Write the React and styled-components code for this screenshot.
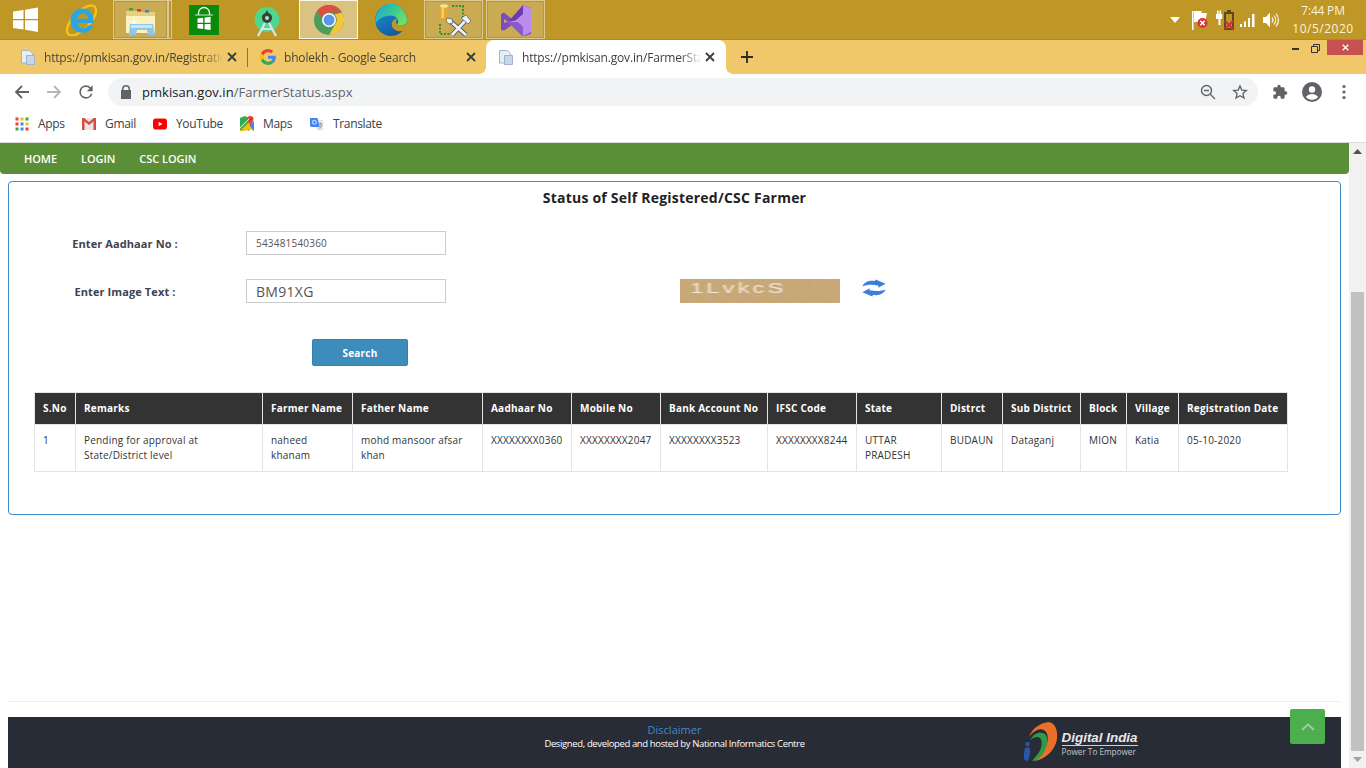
import React from 'react';
import styled, { createGlobalStyle } from 'styled-components';

const Global = createGlobalStyle`
  html, body { margin: 0; padding: 0; width: 1366px; height: 768px; overflow: hidden; background: #fff; }
  * { box-sizing: border-box; }
  body { font-family: "Open Sans", "Noto Sans", Arial, sans-serif; }
`;

const Screen = styled.div`
  width: 1366px; height: 768px; display: flex; flex-direction: column; overflow: hidden; background: #fff;
`;

/* ---------- Windows taskbar ---------- */
const Taskbar = styled.div`
  height: 40px; flex: none; background: #bf9727; border-bottom: 1px solid #b08a20;
  display: flex; align-items: stretch; justify-content: space-between;
`;
const TaskGroup = styled.div`
  display: flex; align-items: stretch;
`;
const TaskSlot = styled.div`
  width: ${p => p.$w || 48}px; height: 39px; flex: none; display: flex; align-items: center; justify-content: center;
  margin-left: ${p => p.$ml || 0}px;
  ${p => p.$state === 'open' && `background: rgba(255,255,255,.2); border: 1px solid rgba(255,255,255,.35); box-shadow: inset 0 0 0 1px rgba(120,90,10,.25);`}
  ${p => p.$state === 'active' && `background: rgba(255,255,255,.42); border: 1px solid rgba(255,255,255,.85);`}
`;
const Tray = styled.div`
  display: flex; align-items: center; padding-right: 16px; color: #fff;
`;
const TrayIcon = styled.div`
  display: flex; align-items: center; justify-content: center; margin-left: ${p => p.$ml || 0}px; width: ${p => p.$w}px;
`;
const Clock = styled.div`
  margin-left: 17px; width: 54px; display: flex; flex-direction: column; align-items: center;
  font-family: "Open Sans", sans-serif; font-size: 12px; line-height: 18px; color: #fbf3dc; white-space: nowrap;
`;
const ClockLine = styled.div`
  letter-spacing: ${p => p.$ls};
`;

/* ---------- Chrome tabs ---------- */
const TabStrip = styled.div`
  height: 34px; flex: none; background: #f0c869; display: flex; align-items: stretch; padding-left: 8px; position: relative;
`;
const Tab = styled.div`
  width: ${p => p.$w}px; flex: none; display: flex; align-items: center; padding: 0 ${p => p.$pr}px 0 12px; position: relative;
  font-family: "Open Sans", sans-serif; font-size: 12px; color: #4a4436; margin-right: ${p => p.$mr || 0}px;
  ${p => p.$active && `
    background: #fff; border-radius: 8px 8px 0 0; color: #3c4043;
    &::before, &::after { content: ''; position: absolute; bottom: 0; width: 8px; height: 8px; }
    &::before { left: -8px; background: radial-gradient(circle at 0 0, transparent 8px, #fff 8px); }
    &::after { right: -8px; background: radial-gradient(circle at 100% 0, transparent 8px, #fff 8px); }
  `}
  ${p => p.$divider && `
    &::after { content: ''; position: absolute; right: 0; top: 8px; height: 19px; width: 1px; background: #8b7440; }
  `}
`;
const TabTitle = styled.span`
  flex: 1; margin-left: 8px; white-space: nowrap; overflow: hidden; letter-spacing: -.18px;
  -webkit-mask-image: linear-gradient(90deg, #000 88%, transparent 100%);
  mask-image: linear-gradient(90deg, #000 88%, transparent 100%);
`;
const TabClose = styled.div`
  width: 16px; height: 16px; flex: none; display: flex; align-items: center; justify-content: center;
`;
const NewTab = styled.div`
  width: 20px; display: flex; align-items: center; justify-content: center; margin-left: 11px;
`;
const WindowControls = styled.div`
  position: absolute; right: 3px; top: 0; display: flex; align-items: flex-start;
`;
const WinBtn = styled.div`
  height: 15px; width: ${p => p.$w}px; display: flex; align-items: center; justify-content: center; padding-top: ${p => p.$pt || 0}px;
  ${p => p.$close && `background: #c75050;`}
`;

/* ---------- Chrome toolbar ---------- */
const Toolbar = styled.div`
  height: 37px; flex: none; background: #fff; display: flex; align-items: center; padding: 0 0 1px 12px;
`;
const ToolBtn = styled.div`
  width: 20px; height: 20px; display: flex; align-items: center; justify-content: center; flex: none;
  margin-right: ${p => p.$mr || 0}px; margin-left: ${p => p.$ml || 0}px;
`;
const Omnibox = styled.div`
  width: 1150px; height: 28px; border-radius: 14px; background: #f1f3f4; display: flex; align-items: center;
  padding: 0 8px 0 12px; font-family: "Open Sans", sans-serif; font-size: 13px; flex: none;
`;
const Url = styled.span`
  margin-left: 10px; flex: 1; color: #5f6368; letter-spacing: .05px;
  b { font-weight: 400; color: #202124; }
`;
const BookmarksBar = styled.div`
  height: 28px; flex: none; display: flex; align-items: center; padding: 0 0 3px 15px;
  font-family: "Open Sans", sans-serif; font-size: 12px; color: #3c4043;
`;
const Bookmark = styled.div`
  display: flex; align-items: center; gap: 9px; width: ${p => p.$w}px; flex: none;
  span { letter-spacing: -.34px; }
`;

/* ---------- Page ---------- */
const Viewport = styled.div`
  flex: 1; min-height: 0; display: flex; margin-top: 3px; border-top: 1px solid #dcdcdc;
`;
const Page = styled.div`
  flex: 1; min-width: 0; display: flex; flex-direction: column; position: relative;
`;
const Nav = styled.nav`
  height: 31px; flex: none; background: #5a8f38; border-radius: 0 0 4px 4px; display: flex; align-items: center; padding-left: 24px; gap: 24px;
`;
const NavLink = styled.a`
  color: #fff; font-size: 11px; font-weight: 600; letter-spacing: -.05px; line-height: 31px; text-decoration: none;
`;
const Panel = styled.section`
  margin: 7px 8px 0; height: 334px; width: 1333px; flex: none; border: 1px solid #428bca; border-radius: 4px; padding-top: 6px;
`;
const Title = styled.h2`
  margin: 0; font-size: 14px; font-weight: 700; color: #222; text-align: center; line-height: 19px; letter-spacing: .22px;
`;
const FormRow = styled.div`
  display: grid; grid-template-columns: 220px 200px auto auto; justify-content: start; align-items: center;
  column-gap: 11px; padding-left: 6px; margin-top: ${p => p.$mt}px; height: 24px;
`;
const FieldLabel = styled.label`
  text-align: center; font-size: 11px; font-weight: 700; color: #3d4352; letter-spacing: .1px;
`;
const TextBox = styled.div`
  height: 24px; border: 1px solid #ccc; background: #fff; color: #555; display: flex; align-items: center; padding-left: 9px;
  font-size: ${p => p.$fs}px; letter-spacing: ${p => p.$ls};
`;
const Captcha = styled.div`
  width: 160px; height: 24px; margin-left: 223px; background: #c9a878; overflow: hidden;
  background-image: repeating-linear-gradient(45deg, rgba(255,255,255,.04) 0 1px, transparent 1px 3px), repeating-linear-gradient(-45deg, rgba(110,70,20,.04) 0 1px, transparent 1px 3px);
  display: flex; align-items: center; padding-left: 10px;
  font-family: "Liberation Sans", Arial, sans-serif; font-size: 14px; color: #f1e9da; letter-spacing: 1.8px; line-height: 20px;
  span { filter: blur(.5px); transform: translateY(-3px) scaleX(1.7); transform-origin: left center; display: block; white-space: nowrap; }
`;
const Refresh = styled.div`
  margin-left: 9px; width: 28px; height: 24px; display: flex; align-items: flex-start; justify-content: center;
`;
const SearchRow = styled.div`
  margin-top: 36px; padding-left: 303px;
`;
const SearchButton = styled.button`
  display: block; width: 96px; height: 27px; border: 1px solid #367fa9; border-radius: 2px; background: #3c8dbc; color: #fff;
  font-family: inherit; font-size: 10px; font-weight: 700; letter-spacing: .2px; padding: 0;
`;
const Table = styled.table`
  margin: 26px 0 0 25px; width: 1253px; border-collapse: collapse; table-layout: fixed; font-size: 10px; color: #333;
`;
const Th = styled.th`
  background: #333; color: #fff; font-weight: 700; text-align: left; height: 32px; padding: 0 8px 2px;
  border: 1px solid #e4e4e4; white-space: nowrap; font-size: 10px; letter-spacing: .22px;
`;
const Td = styled.td`
  border: 1px solid #e4e4e4; padding: 8px 8px 8px; vertical-align: top; line-height: 15px; height: 47px; letter-spacing: .2px;
  font-size: 10px;
`;
const Spacer = styled.div`
  flex: 1;
`;
const Rule = styled.hr`
  flex: none; margin: 0 8px 15px; width: 1333px; height: 1px; border: 0; background: #f0f0f0;
`;
const Footer = styled.footer`
  flex: none; margin: 0 8px; width: 1333px; height: 51px; background: #272c36; display: grid; grid-template-columns: 1fr auto 1fr;
`;
const FootText = styled.div`
  text-align: center; padding-top: 5px;
`;
const Disclaimer = styled.a`
  display: block; color: #428bca; font-size: 11px; line-height: 15px;
`;
const Credit = styled.div`
  color: #fff; font-size: 9.5px; line-height: 13px; letter-spacing: -.37px; white-space: nowrap;
`;
const LogoWrap = styled.div`
  padding: 5px 0 0 218px; display: flex; align-items: flex-start;
`;
const LogoText = styled.div`
  margin-left: 3px; margin-top: 9px; color: #e8e8e8;
`;
const LogoName = styled.div`
  font-family: "Liberation Sans", Arial, sans-serif; font-size: 13.4px; font-weight: 700; font-style: italic; line-height: 14px;
  border-bottom: 1px solid #cfcfcf; white-space: nowrap;
`;
const LogoTag = styled.div`
  font-size: 8.2px; line-height: 11px; color: #c6c6c6; white-space: nowrap;
`;
const ToTop = styled.a`
  position: absolute; right: 24px; bottom: 24px; width: 35px; height: 35px; background: #4cae4c; border-radius: 2px;
  display: flex; align-items: center; justify-content: center;
`;
const Scrollbar = styled.div`
  width: 17px; flex: none; background: #f1f1f1; display: flex; flex-direction: column; align-items: stretch;
`;
const ScrollArrow = styled.div`
  height: 17px; flex: none; display: flex; align-items: center; justify-content: center;
`;
const ScrollTrack = styled.div`
  flex: 1; padding: 132px 2px 0; display: flex;
`;
const Thumb = styled.div`
  flex: 1; background: #c1c1c1;
`;

/* ---------- Icons ---------- */
const WindowsLogo = () => (
  <svg width="27" height="27" viewBox="0 0 27 27"><path fill="#fff" d="M1 5.500l10.500-1.600v9H1zM13 3.700L26 1.500v11.400H13zM1 14.300h10.500v9.100L1 21.900zM13 14.300h13v11.600l-13-2.100z"/></svg>
);
const IELogo = () => (
  <svg width="32" height="32" viewBox="0 0 32 32">
    <ellipse cx="15.500" cy="16.500" rx="19" ry="8.500" transform="rotate(-46 15.500 16.500)" fill="none" stroke="#f3c11b" strokeWidth="2.400"/>
    <path fill="#29a5e3" d="M16 4.500c6.800 0 11.500 5 11.500 11.500v3H11.300c.3 3.200 2.400 5.200 5.400 5.200 2.200 0 4-1.100 4.900-2.800h5.500C25.300 26 21.500 28.800 16.500 28.800 9.500 28.800 4.500 23.500 4.500 16.800S9.500 4.500 16 4.500zm-4.600 10.300h10.800c-.2-3-2.400-5.200-5.200-5.200-3 0-5.200 2.100-5.600 5.200z"/>
  </svg>
);
const Folder = () => (
  <svg width="32" height="32" viewBox="0 0 32 32">
    <path fill="#e9cf7e" d="M1 7h11l2 1h16v21H1z"/>
    <rect x="4" y="4" width="4" height="2.500" fill="#3fa34a"/><rect x="12" y="5" width="4" height="2.500" fill="#c9453a"/><rect x="20" y="6" width="4" height="2.500" fill="#3a88c9"/>
    <path fill="#fdf1bd" d="M1 12h29v17H1z"/>
    <path fill="#fff" opacity=".9" d="M9 13l1 4 4 1-4 1-1 4-1-4-4-1 4-1z"/>
    <path fill="#8fc7e8" d="M5 20h23l2 11h-7l-1-5H12l-1 5H4z"/>
    <path fill="#c8e6f6" d="M6 21h21v3H6z"/>
  </svg>
);
const StoreIcon = () => (
  <svg width="30" height="30" viewBox="0 0 30 30">
    <rect width="30" height="30" fill="#0a8a0a"/>
    <path fill="none" stroke="#fff" strokeWidth="1.300" d="M9.500 10V8a5.500 5.500 0 0 1 11 0v2"/>
    <path fill="none" stroke="#cfe9cf" strokeWidth="1" d="M6 10h18"/>
    <path fill="#fff" d="M8.500 13.500l5.700-.8v5H8.500zM15.600 12.500l6-.8v6h-6zM8.500 19h5.700v5l-5.700-.8zM15.600 19h6v6l-6-.8z"/>
  </svg>
);
const AndroidStudio = () => (
  <svg width="30" height="34" viewBox="0 0 30 34">
    <circle cx="15" cy="16.500" r="12.500" fill="#4fd88d"/>
    <path fill="#34423e" d="M15 7l1.500 3a5 5 0 0 1 3.500 5 5 5 0 0 1-10 0 5 5 0 0 1 3.500-5z"/>
    <circle cx="15" cy="15" r="2" fill="#a8e8c4"/>
    <path fill="none" stroke="#d8e6ec" strokeWidth="2.200" d="M13 20L6 33M17 20l7 13M9 26h12"/>
  </svg>
);
const Chrome = () => (
  <svg width="30" height="30" viewBox="0 0 30 30">
    <circle cx="15" cy="15" r="15" fill="#4a9d5b"/>
    <path fill="#dc5044" d="M15 0a15 15 0 0 1 13 7.500H15a7.500 7.500 0 0 0-7.200 5.400L2.600 6.500A15 15 0 0 1 15 0z"/>
    <path fill="#f5c63c" d="M28 7.500A15 15 0 0 1 15 30l6.500-11.200A7.500 7.500 0 0 0 20.500 9.500z" />
    <circle cx="15" cy="15" r="7" fill="#fff"/><circle cx="15" cy="15" r="5.500" fill="#5c94ec"/>
  </svg>
);
const Edge = () => (
  <svg width="32" height="32" viewBox="0 0 32 32">
    <defs>
      <linearGradient id="eg1" x1="0" y1="0" x2="1" y2=".6"><stop offset="0" stopColor="#1fa5d6"/><stop offset=".55" stopColor="#35c79a"/><stop offset="1" stopColor="#74dd62"/></linearGradient>
      <linearGradient id="eg2" x1="0" y1="0" x2=".7" y2="1"><stop offset="0" stopColor="#1c92d4"/><stop offset="1" stopColor="#10599f"/></linearGradient>
    </defs>
    <circle cx="16" cy="16" r="16" fill="url(#eg2)"/>
    <path fill="url(#eg1)" d="M16 0C25 0 32 7.500 32 17c0 3.500-5 5.500-10 4.500 3-4.500 0-10-6-10C9 11.500 3 15 0 20 0 8 7 0 16 0z"/>
    <path fill="#bf9727" d="M32 18c-1 4-7 5-10 2-2-2-1-5 2-5-5-1-8 3-7 7 1 4 6 6 11 5l8 5z"/>
  </svg>
);
const Tools = () => (
  <svg width="34" height="34" viewBox="0 0 34 34">
    <path fill="#e3a92b" d="M3 3h8v13H3z"/><ellipse cx="7" cy="3" rx="4" ry="1.800" fill="#f7e0a0"/><path fill="#f5d06a" d="M4.500 4h2.500v11H4.500z"/>
    <path fill="none" stroke="#2f8f3a" strokeWidth="2" strokeDasharray="2 1.500" d="M15 3h11v13M3 21v10h11"/>
    <path stroke="#4a5664" strokeWidth="4.500" d="M13 18l16 14M28 18L15 32"/>
    <path stroke="#eef2f6" strokeWidth="2.800" d="M13 18l16 14M28 18L15 32"/>
    <path fill="#eef2f6" stroke="#4a5664" strokeWidth=".7" d="M24 15l5-3 5 6-3 3z"/>
    <path fill="#eef2f6" stroke="#4a5664" strokeWidth=".7" d="M10 15l5 1 1 4-4 1-3-3z"/>
  </svg>
);
const VS = () => (
  <svg width="34" height="32" viewBox="0 0 32 32">
    <path fill="#7c4cc4" d="M1 10l3-1.500L12 15 8 18l-4-3v4l4-1 4 3-8 5.500L1 26z"/>
    <path fill="#6a3bb4" d="M8 18L23 1l8 3v3l-13 9z"/>
    <path fill="#8a58cf" d="M8 18l15 15 8-3v-3l-13-9z"/>
    <path fill="#b98cee" d="M23 1l8 3v24l-8 4V23l-7-7 7-6z"/>
  </svg>
);
const Caret = () => <svg width="10" height="6" viewBox="0 0 10 6"><path fill="#fff" d="M0 0h10L5 6z"/></svg>;
const FlagX = () => (
  <svg width="18" height="22" viewBox="0 0 18 22">
    <path fill="#fff" d="M1 2h1.500v19H1zM3 2h8l-1 2h6l-2 9H3z"/>
    <circle cx="11.500" cy="14" r="5" fill="#d9333a"/><path stroke="#fff" strokeWidth="1.600" d="M9.300 11.800l4.400 4.400M13.700 11.800l-4.400 4.400"/>
  </svg>
);
const BatteryX = () => (
  <svg width="19" height="22" viewBox="0 0 19 22">
    <path fill="#fff" d="M2 1.500h1.500V5h1V1.500H6V5h1.200v5H5.500v6h-2v-6H1V5h1z"/>
    <path fill="none" stroke="#5c4a1e" strokeWidth="2" d="M10 4h8v16h-8z"/><rect x="12" y="1" width="4" height="3" fill="#5c4a1e"/>
    <path stroke="#d9333a" strokeWidth="2.200" d="M10 12l8 8M18 12l-8 8"/>
  </svg>
);
const Signal = () => (
  <svg width="16" height="14" viewBox="0 0 16 14"><path fill="#fff" d="M1 11h2v3H1zM5 8.500h2V14H5zM9 5h2v9H9zM13 1h2.500v13H13z"/></svg>
);
const Speaker = () => (
  <svg width="17" height="18" viewBox="0 0 17 18">
    <path fill="#fff" d="M1 6h3l4-4.500V16.500L4 12H1z"/>
    <path fill="none" stroke="#fff" strokeWidth="1.100" d="M10 6.500a4 4 0 0 1 0 5M12 4.500a7 7 0 0 1 0 9M14 2.500a10 10 0 0 1 0 13"/>
  </svg>
);
const DocFavicon = () => (
  <svg width="16" height="17" viewBox="0 0 16 17">
    <path fill="#e9eef5" stroke="#9fb4cc" d="M1.500 1.500h8l3 3V14h-11z"/>
    <path fill="#c7d6e8" stroke="#9fb4cc" d="M6.500 6.500h8v9h-8z"/>
  </svg>
);
const GoogleG = () => (
  <svg width="16" height="16" viewBox="0 0 48 48">
    <path fill="#EA4335" d="M24 9.500c3.500 0 6.700 1.300 9.100 3.500l6.800-6.800C35.800 2.400 30.300 0 24 0 14.600 0 6.500 5.400 2.600 13.200l7.900 6.200C12.400 13.700 17.700 9.500 24 9.500z"/>
    <path fill="#4285F4" d="M47.500 24.500c0-1.600-.2-3.100-.4-4.500H24v9h13.200c-.6 3-2.300 5.500-4.800 7.200l7.700 6c4.500-4.200 7.400-10.300 7.400-17.700z"/>
    <path fill="#FBBC05" d="M10.500 28.600c-.5-1.400-.8-3-.8-4.600s.3-3.200.8-4.600l-7.900-6.200C1 16.500 0 20.100 0 24s1 7.500 2.600 10.800z"/>
    <path fill="#34A853" d="M24 48c6.500 0 11.900-2.100 15.900-5.800l-7.700-6c-2.200 1.400-4.900 2.300-8.200 2.300-6.300 0-11.600-4.200-13.500-9.900l-7.900 6.200C6.500 42.600 14.600 48 24 48z"/>
  </svg>
);
const CloseX = ({ c = '#3c3c3c', s = 10 }) => (
  <svg width={s} height={s} viewBox="0 0 10 10"><path stroke={c} strokeWidth="1.800" d="M1 1l8 8M9 1l-8 8"/></svg>
);
const Plus = () => <svg width="12" height="12" viewBox="0 0 12 12"><path stroke="#2a2a2a" strokeWidth="1.800" d="M6 0v12M0 6h12"/></svg>;
const Back = ({ c }) => (
  <svg width="16" height="16" viewBox="0 0 16 16"><path fill="none" stroke={c} strokeWidth="1.800" d="M15 8H2M8 2L2 8l6 6"/></svg>
);
const Forward = ({ c }) => (
  <svg width="16" height="16" viewBox="0 0 16 16"><path fill="none" stroke={c} strokeWidth="1.800" d="M1 8h13M8 2l6 6-6 6"/></svg>
);
const Reload = () => (
  <svg width="20" height="20" viewBox="0 0 24 24"><path fill="#5f6368" d="M17.650 6.350A7.960 7.960 0 0 0 12 4a8 8 0 1 0 7.730 10h-2.080A6 6 0 1 1 12 6c1.660 0 3.140.69 4.220 1.780L13 11h7V4z"/></svg>
);
const Lock = () => (
  <svg width="12" height="14" viewBox="0 0 12 14"><path fill="#5f6368" d="M2 5V4a4 4 0 0 1 8 0v1h1v9H1V5zm1.500 0h5V4a2.500 2.500 0 0 0-5 0z"/></svg>
);
const ZoomOut = () => (
  <svg width="16" height="16" viewBox="0 0 16 16"><circle cx="6.500" cy="6.500" r="5" fill="none" stroke="#5f6368" strokeWidth="1.400"/><path stroke="#5f6368" strokeWidth="1.400" d="M10.500 10.500L15 15M4 6.500h5"/></svg>
);
const Star = () => (
  <svg width="16" height="16" viewBox="0 0 24 24"><path fill="none" stroke="#5f6368" strokeWidth="2" d="M12 3l2.700 6.200 6.800.6-5.100 4.500 1.500 6.700-5.900-3.500L6.100 21l1.500-6.700L2.500 9.800l6.800-.6z"/></svg>
);
const Puzzle = () => (
  <svg width="16" height="16" viewBox="0 0 24 24"><path fill="#5f6368" d="M20.500 11H19V7a2 2 0 0 0-2-2h-4V3.500a2.500 2.500 0 0 0-5 0V5H4a2 2 0 0 0-2 2v3.800h1.500a2.700 2.700 0 0 1 0 5.400H2V20a2 2 0 0 0 2 2h3.800v-1.500a2.700 2.700 0 0 1 5.400 0V22H17a2 2 0 0 0 2-2v-4h1.500a2.500 2.500 0 0 0 0-5z"/></svg>
);
const Profile = () => (
  <svg width="20" height="20" viewBox="0 0 20 20"><circle cx="10" cy="10" r="10" fill="#5f6368"/><circle cx="10" cy="7.500" r="3.200" fill="#fff"/><path fill="#fff" d="M3.800 15c1.400-2 4-3 6.200-3s4.800 1 6.200 3a8 8 0 0 1-12.400 0z"/></svg>
);
const Dots = () => (
  <svg width="4" height="16" viewBox="0 0 4 16"><circle cx="2" cy="2.500" r="1.600" fill="#5f6368"/><circle cx="2" cy="8" r="1.600" fill="#5f6368"/><circle cx="2" cy="13.500" r="1.600" fill="#5f6368"/></svg>
);
const AppsGrid = () => {
  const cols = ['#ea4335', '#fbbc05', '#34a853', '#ea4335', '#4285f4', '#fbbc05', '#34a853', '#4285f4', '#ea4335'];
  return (
    <svg width="14" height="14" viewBox="0 0 14 14">
      {cols.map((c, i) => <rect key={i} x={(i % 3) * 5 + .5} y={Math.floor(i / 3) * 5 + .5} width="3" height="3" fill={c} />)}
    </svg>
  );
};
const GmailIcon = () => (
  <svg width="14" height="12" viewBox="0 0 14 12">
    <path fill="#e6e6e6" d="M0 0h14v12H0z"/><path fill="#d54c3f" d="M0 0h2.500v12H0zM11.500 0H14v12h-2.500z"/><path fill="#d54c3f" d="M0 0h2l5 4 5-4h2v1.500L7 7 0 1.500z"/>
  </svg>
);
const YouTubeIcon = () => (
  <svg width="14" height="12" viewBox="0 0 15 12"><rect width="15" height="12" rx="3" fill="#f00"/><path fill="#fff" d="M6 3.500L10 6 6 8.500z"/></svg>
);
const MapsIcon = () => (
  <svg width="14" height="15" viewBox="0 0 15 16">
    <path fill="#34a853" d="M0 2l5-2 5 2v14l-5-2-5 2z"/><path fill="#fbbc05" d="M0 16l10-10 5 10-5-2-5 2z" />
    <path fill="#4285f4" d="M10 10l5 6V5z"/><path fill="#ea4335" d="M11 0a3.500 3.500 0 0 1 3.500 3.500c0 2-2 3.500-3.500 6-1.500-2.500-3.500-4-3.500-6A3.500 3.500 0 0 1 11 0z"/><circle cx="11" cy="3.500" r="1.200" fill="#a52714"/>
    <path fill="#fff" opacity=".7" d="M0 12L10 2v1.500L0 13.500z"/>
  </svg>
);
const TranslateIcon = () => (
  <svg width="14" height="16" viewBox="0 0 16 16">
    <path fill="#dfe3ea" d="M6 3h9v12H8z"/><path fill="#4285f4" d="M0 1h8.500l2.500 10.500H2a2 2 0 0 1-2-2z"/>
    <circle cx="5" cy="6" r="2.200" fill="none" stroke="#fff" strokeWidth="1"/><path stroke="#7a8494" strokeWidth="1" d="M10 8h4M12 7v1M11 13l2.500-4"/>
  </svg>
);
const RefreshIcon = () => (
  <svg width="28" height="19" viewBox="0 0 26 18">
    <path fill="#3a7fe0" d="M2 7c2-4.500 7-6 12-5l.5-1.500L24 4.500l-7 3.800.3-2C11 5 6 5.500 2 7z"/>
    <path fill="#3a7fe0" d="M24 10c-2 4.500-7 6-12 5l-.5 1.500L2 12.500l7-3.800-.3 2C15 12 20 11.500 24 10z"/>
  </svg>
);
const DigitalIndiaMark = () => (
  <svg width="36" height="40" viewBox="0 0 36 40">
    <path fill="#e8702a" d="M26 0c-8 1-16 5-20 15C11 8 17 6 21 8c5 3 5 12 0 20-3 5-7 9-9 11 10-2 20-10 22-22C35 8 32 1 26 0z"/>
    <path fill="#2f9a48" d="M22 12c-5-3-11-1-15 6 4-3 8-4 10-2 3 3 2 11-3 17-2 2-3 4-5 6 6 0 10-5 13-11 3-7 3-13 0-16z"/>
    <circle cx="4.500" cy="22" r="2.200" fill="#2a56a8"/>
    <path fill="#2a56a8" d="M2 26c2-1 4-1 5 1 .5 3-.5 8-2 12-2 0-4-1-4-3-.5-3 0-7 1-10z"/>
  </svg>
);
const ChevronUp = () => (
  <svg width="14" height="8" viewBox="0 0 14 8"><path fill="none" stroke="#a8c8a8" strokeWidth="1.800" d="M1 7l6-5.500L13 7"/></svg>
);
const ArrowUp = () => <svg width="9" height="5" viewBox="0 0 9 5"><path fill="#505050" d="M4.500 0L9 5H0z"/></svg>;
const ArrowDown = () => <svg width="9" height="5" viewBox="0 0 9 5"><path fill="#a3a3a3" d="M0 0h9L4.500 5z"/></svg>;

/* ---------- Data ---------- */
const columns = [
  ['S.No', 41], ['Remarks', 187], ['Farmer Name', 90], ['Father Name', 130], ['Aadhaar No', 89], ['Mobile No', 89],
  ['Bank Account No', 107], ['IFSC Code', 89], ['State', 85], ['Distrct', 61], ['Sub District', 78], ['Block', 46], ['Village', 52], ['Registration Date', 109],
];
const row = ['1', 'Pending for approval at State/District level', 'naheed khanam', 'mohd mansoor afsar khan', 'XXXXXXXX0360', 'XXXXXXXX2047', 'XXXXXXXX3523', 'XXXXXXXX8244', 'UTTAR PRADESH', 'BUDAUN', 'Dataganj', 'MION', 'Katia', '05-10-2020'];
const bookmarks = [
  ['Apps', <AppsGrid />, 67], ['Gmail', <GmailIcon />, 71], ['YouTube', <YouTubeIcon />, 87], ['Maps', <MapsIcon />, 70], ['Translate', <TranslateIcon />, 90],
];

export default function App() {
  return (
    <Screen>
      <Global />
      <Taskbar>
        <TaskGroup>
          <TaskSlot $w={50}><WindowsLogo /></TaskSlot>
          <TaskSlot $w={63}><IELogo /></TaskSlot>
          <TaskSlot $w={55} $state="open"><Folder /></TaskSlot>
          <TaskSlot $w={4} $state="open" />
          <TaskSlot $w={64}><StoreIcon /></TaskSlot>
          <TaskSlot $w={62}><AndroidStudio /></TaskSlot>
          <TaskSlot $w={59} $ml={1} $state="active"><Chrome /></TaskSlot>
          <TaskSlot $w={66}><Edge /></TaskSlot>
          <TaskSlot $w={59} $state="open"><Tools /></TaskSlot>
          <TaskSlot $w={59} $ml={3} $state="open"><VS /></TaskSlot>
        </TaskGroup>
        <Tray>
          <TrayIcon $w={10}><Caret /></TrayIcon>
          <TrayIcon $w={18} $ml={11}><FlagX /></TrayIcon>
          <TrayIcon $w={19} $ml={6}><BatteryX /></TrayIcon>
          <TrayIcon $w={16} $ml={5}><Signal /></TrayIcon>
          <TrayIcon $w={17} $ml={7}><Speaker /></TrayIcon>
          <Clock>
            <ClockLine $ls="-.2px">7:44 PM</ClockLine>
            <ClockLine $ls=".5px">10/5/2020</ClockLine>
          </Clock>
        </Tray>
      </Taskbar>
      <TabStrip>
        <Tab $w={240} $pr={8} $divider><DocFavicon /><TabTitle>https://pmkisan.gov.in/Registration</TabTitle><TabClose><CloseX /></TabClose></Tab>
        <Tab $w={232} $pr={1} $mr={6}><GoogleG /><TabTitle>bholekh - Google Search</TabTitle><TabClose><CloseX /></TabClose></Tab>
        <Tab $w={240} $pr={8} $active><DocFavicon /><TabTitle>https://pmkisan.gov.in/FarmerStatus</TabTitle><TabClose><CloseX /></TabClose></Tab>
        <NewTab><Plus /></NewTab>
        <WindowControls>
          <WinBtn $w={15} $pt={3}><svg width="7" height="2"><rect width="7" height="2" fill="#333" /></svg></WinBtn>
          <WinBtn $w={24} $pt={1}><svg width="9" height="9" viewBox="0 0 9 9"><path fill="none" stroke="#333" d="M2.500 2.500v-2h6v6h-2M.5 2.500h6v6h-6z" /></svg></WinBtn>
          <WinBtn $w={36} $close><CloseX c="#fff" s={7} /></WinBtn>
        </WindowControls>
      </TabStrip>
      <Toolbar>
        <ToolBtn $mr={12}><Back c="#5f6368" /></ToolBtn>
        <ToolBtn $mr={12}><Forward c="#b4b6b9" /></ToolBtn>
        <ToolBtn $mr={12}><Reload /></ToolBtn>
        <Omnibox>
          <Lock />
          <Url><b>pmkisan.gov.in</b>/FarmerStatus.aspx</Url>
          <ToolBtn $mr={12}><ZoomOut /></ToolBtn>
          <ToolBtn><Star /></ToolBtn>
        </Omnibox>
        <ToolBtn $ml={12} $mr={12}><Puzzle /></ToolBtn>
        <ToolBtn $mr={12}><Profile /></ToolBtn>
        <ToolBtn><Dots /></ToolBtn>
      </Toolbar>
      <BookmarksBar>
        {bookmarks.map(([name, icon, w]) => (
          <Bookmark key={name} $w={w}>{icon}<span>{name}</span></Bookmark>
        ))}
      </BookmarksBar>
      <Viewport>
        <Page>
          <Nav>
            <NavLink>HOME</NavLink>
            <NavLink>LOGIN</NavLink>
            <NavLink>CSC LOGIN</NavLink>
          </Nav>
          <Panel>
            <Title>Status of Self Registered/CSC Farmer</Title>
            <FormRow $mt={24}>
              <FieldLabel>Enter Aadhaar No :</FieldLabel>
              <TextBox $fs={10} $ls=".2px">543481540360</TextBox>
            </FormRow>
            <FormRow $mt={24}>
              <FieldLabel>Enter Image Text :</FieldLabel>
              <TextBox $fs={14} $ls=".3px">BM91XG</TextBox>
              <Captcha><span>1LvkcS</span></Captcha>
              <Refresh><RefreshIcon /></Refresh>
            </FormRow>
            <SearchRow><SearchButton>Search</SearchButton></SearchRow>
            <Table>
              <colgroup>{columns.map(([n, w]) => <col key={n} width={w} />)}</colgroup>
              <thead><tr>{columns.map(([n]) => <Th key={n}>{n}</Th>)}</tr></thead>
              <tbody><tr>{row.map((c, i) => <Td key={i}>{c}</Td>)}</tr></tbody>
            </Table>
          </Panel>
          <Spacer />
          <Rule />
          <Footer>
            <div />
            <FootText>
              <Disclaimer>Disclaimer</Disclaimer>
              <Credit>Designed, developed and hosted by National Informatics Centre</Credit>
            </FootText>
            <LogoWrap>
              <DigitalIndiaMark />
              <LogoText>
                <LogoName>Digital India</LogoName>
                <LogoTag>Power To Empower</LogoTag>
              </LogoText>
            </LogoWrap>
          </Footer>
          <ToTop><ChevronUp /></ToTop>
        </Page>
        <Scrollbar>
          <ScrollArrow><ArrowUp /></ScrollArrow>
          <ScrollTrack><Thumb /></ScrollTrack>
          <ScrollArrow><ArrowDown /></ScrollArrow>
        </Scrollbar>
      </Viewport>
    </Screen>
  );
}
